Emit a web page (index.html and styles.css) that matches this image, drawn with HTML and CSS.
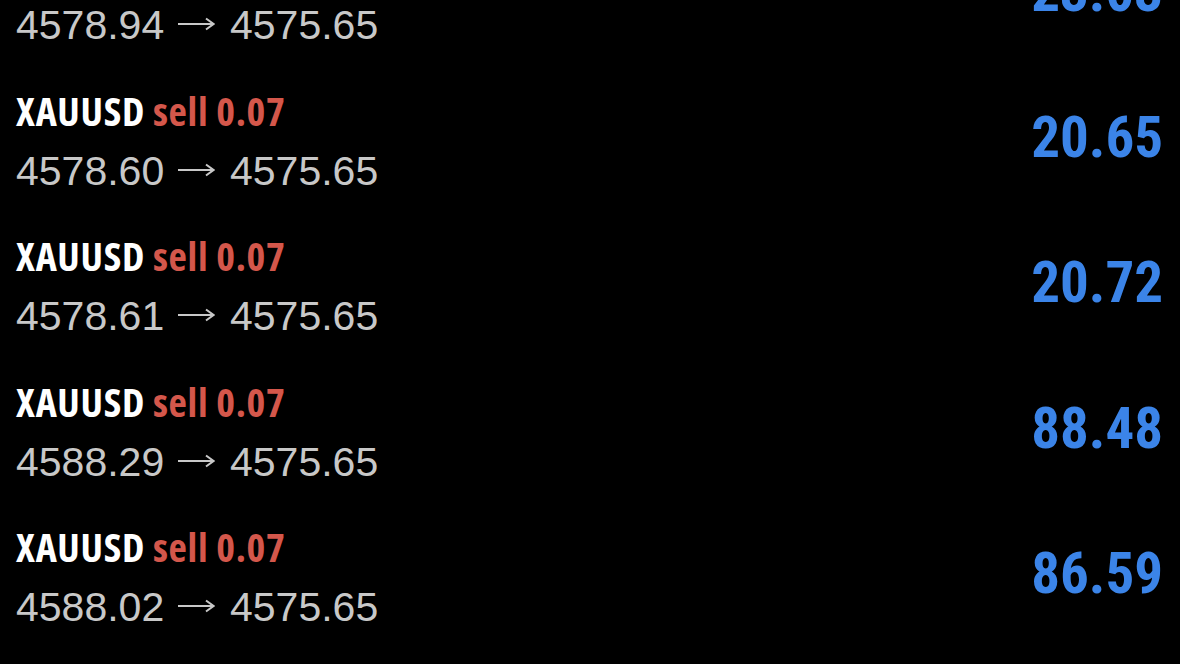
FILE: index.html
```html
<!DOCTYPE html>
<html lang="en">
   <head>
      <meta charset="UTF-8"/>
      <title>Positions</title>
      <link rel="stylesheet" href="styles.css">
   </head>
   <body>
      <div class="positions">
         <div class="position">
            <div class="info">
               <div class="title">XAUUSD <span class="side">sell 0.07</span></div>
               <div class="prices">4578.94 <svg class="arrow" width="37" height="14" viewBox="0 0 37 14"><path d="M0 7H35M28 1.5L35.5 7L28 12.5" fill="none" stroke="#c8c8c8" stroke-width="2"/></svg> 4575.65</div>
            </div>
            <div class="profit">23.03</div>
         </div>

         <div class="position">
            <div class="info">
               <div class="title">XAUUSD <span class="side">sell 0.07</span></div>
               <div class="prices">4578.60 <svg class="arrow" width="37" height="14" viewBox="0 0 37 14"><path d="M0 7H35M28 1.5L35.5 7L28 12.5" fill="none" stroke="#c8c8c8" stroke-width="2"/></svg> 4575.65</div>
            </div>
            <div class="profit">20.65</div>
         </div>

         <div class="position">
            <div class="info">
               <div class="title">XAUUSD <span class="side">sell 0.07</span></div>
               <div class="prices">4578.61 <svg class="arrow" width="37" height="14" viewBox="0 0 37 14"><path d="M0 7H35M28 1.5L35.5 7L28 12.5" fill="none" stroke="#c8c8c8" stroke-width="2"/></svg> 4575.65</div>
            </div>
            <div class="profit">20.72</div>
         </div>

         <div class="position">
            <div class="info">
               <div class="title">XAUUSD <span class="side">sell 0.07</span></div>
               <div class="prices">4588.29 <svg class="arrow" width="37" height="14" viewBox="0 0 37 14"><path d="M0 7H35M28 1.5L35.5 7L28 12.5" fill="none" stroke="#c8c8c8" stroke-width="2"/></svg> 4575.65</div>
            </div>
            <div class="profit">88.48</div>
         </div>

         <div class="position">
            <div class="info">
               <div class="title">XAUUSD <span class="side">sell 0.07</span></div>
               <div class="prices">4588.02 <svg class="arrow" width="37" height="14" viewBox="0 0 37 14"><path d="M0 7H35M28 1.5L35.5 7L28 12.5" fill="none" stroke="#c8c8c8" stroke-width="2"/></svg> 4575.65</div>
            </div>
            <div class="profit">86.59</div>
         </div>
      </div>
   </body>
</html>
```

FILE: styles.css
```css
html, body {
   margin: 0;
   padding: 0;
   background: #000000;
   overflow: hidden;
}

.positions {
   margin-top: -57px;
}

.position {
   display: flex;
   justify-content: space-between;
   align-items: flex-start;
   height: 145.6px;
   padding: 0 17px 0 16px;
   box-sizing: border-box;
}

.title {
   font-family: "Open Sans", sans-serif;
   font-stretch: 80%;
   font-weight: bold;
   font-size: 40px;
   line-height: 44px;
   letter-spacing: 0.7px;
   color: #ffffff;
}

.side {
   color: #d4574b;
}

.prices {
   margin-top: 14px;
   font-family: "Liberation Sans", Arial, sans-serif;
   font-size: 41px;
   line-height: 48px;
   color: #c8c8c8;
}

.arrow {
   margin: 0 4px 0 2px;
   vertical-align: 8px;
}

.profit {
   padding-top: 17px;
   font-family: "Roboto Condensed", "Roboto", sans-serif;
   font-weight: bold;
   font-size: 57px;
   line-height: 64px;
   color: #3b84e8;
}
```
